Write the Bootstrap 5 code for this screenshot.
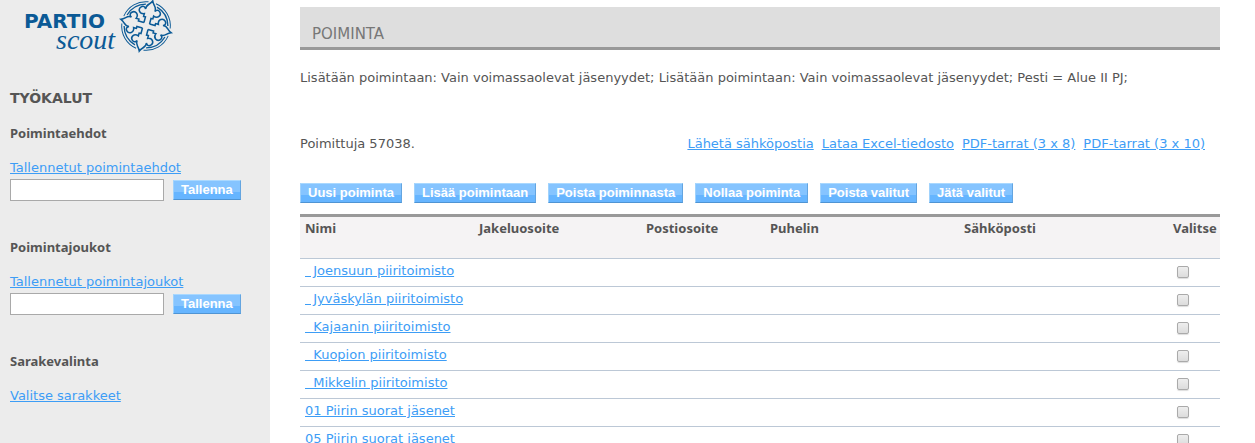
<!DOCTYPE html>
<html lang="fi">
<head>
<meta charset="utf-8">
<meta name="viewport" content="width=device-width, initial-scale=1">
<title>Poiminta</title>
<link href="https://cdn.jsdelivr.net/npm/bootstrap@5.3.0/dist/css/bootstrap.min.css" rel="stylesheet">
<style>
body { font-family: Verdana, "DejaVu Sans", sans-serif; font-size: 13px; line-height: 16px; color: #555; background: #fff; }
a { color: #3d9df6; text-decoration: underline; }
h1, h2, h3 { line-height: 16px; margin: 0; }
.side-pane { flex: 0 0 270px; background: #ececec; padding: 0 10px; }
.site-logo { display: block; width: 180px; height: 58px; }
.tools-title { font-size: 14px; font-weight: 700; margin-top: 32px; }
.tool-title { font-family: "Noto Sans", sans-serif; font-size: 13px; font-weight: 700; margin-bottom: 19px; }
.tool-block { margin-top: 38px; }
.first-block { margin-top: 19px; }
.save-row { gap: 9px; margin-top: 3px; }
.save-row input { width: 154px; height: 22px; border: 1px solid #a9a9a9; border-radius: 0; padding: 1px 4px; background: #fff; }
.btn-tool { font-family: "Liberation Sans", sans-serif; font-size: 13px; font-weight: 700; line-height: 18px; height: 20px; padding: 0 7px; color: #fff; border: 1px solid; border-color: #a9d8ff #64a5e0 #4f94d3 #a0d2fc; border-radius: 0; background: linear-gradient(#85c4ff 60%, #66b5ff 60%); white-space: nowrap; }
.btn-tool:hover { color: #fff; background: #66b5ff; border-color: #4f94d3; }
.main-pane { padding: 7px 35px 0 30px; min-width: 0; }
.page-title { font-size: 15px; font-weight: 400; color: #777; background: #dedede; border-bottom: 3px solid #999; padding: 19px 12px 5px; }
.criteria { margin: 20px 0 50px; }
.result-bar { padding-right: 15px; }
.export-links { gap: 8px; }
.button-bar { gap: 12px; margin: 31px 0 11px; }
.result-table { table-layout: fixed; width: 100%; border-top: 3px solid #999; }
.result-table th { font-family: "Noto Sans", sans-serif; font-size: 13px; height: 43px; padding: 3px 0 0 5px; background: #f5f3f4; border-bottom: 1px solid #bcc8d6; vertical-align: top; white-space: nowrap; }
.result-table td { height: 28px; padding: 4px 5px 0; border-bottom: 1px solid #bcc8d6; vertical-align: top; white-space: pre; }
.result-table input { appearance: none; display: block; width: 12px; height: 12px; margin: 3px 0 0 4px; border: 1px solid #aaa; border-radius: 2px; background: linear-gradient(#eee, #dcdcdc); box-shadow: 0 1px 1px #ddd; }
.result-table input:checked { background: #3d9df6; }
.c-name { width: 174px; } .c-street { width: 167px; } .c-post { width: 124px; } .c-phone { width: 194px; } .c-pick { width: 52px; }
</style>
</head>
<body>
<div class="d-flex min-vh-100">
  <aside class="side-pane">
    <svg class="site-logo" viewBox="10 0 180 58" role="img" aria-label="Partio Scout">
      <g fill="#0b5a96">
        <text x="24" y="28" font-family="DejaVu Sans" font-weight="700" font-size="20">PARTIO</text>
        <text x="56" y="49" font-family="Liberation Serif" font-style="italic" font-size="28">scout</text>
      </g>
      <defs>
        <path id="arm" d="M-3,-3V-9H-5V-12C-10,-10 -13,-15 -10,-18C-8,-20 -6,-19 -5,-17C-6,-22 -2,-22 0,-27C2,-22 6,-22 5,-17C6,-19 8,-20 10,-18C13,-15 10,-10 5,-12V-9H3V-3"/>
        <g id="arcs"><path d="M6,-22A23,23 0 0 1 22,-6" stroke-width="1.4"/><path d="M4,-25A25,25 0 0 1 25,-4" stroke-width="1"/></g>
      </defs>
      <g transform="translate(146 26) rotate(15) scale(.96)" fill="none" stroke="#0b5a96" stroke-width="1.6">
        <use href="#arcs"/><use href="#arcs" transform="rotate(90)"/><use href="#arcs" transform="rotate(180)"/><use href="#arcs" transform="rotate(270)"/>
        <g fill="#ececec">
          <use href="#arm"/><use href="#arm" transform="rotate(90)"/><use href="#arm" transform="rotate(180)"/><use href="#arm" transform="rotate(270)"/>
        </g>
      </g>
    </svg>
    <h2 class="tools-title">TYÖKALUT</h2>
    <section class="first-block">
      <h3 class="tool-title">Poimintaehdot</h3>
      <a href="#">Tallennetut poimintaehdot</a>
      <form class="save-row d-flex align-items-center">
        <input type="text" aria-label="Poimintaehdot"><button type="button" class="btn btn-tool">Tallenna</button>
      </form>
    </section>
    <section class="tool-block">
      <h3 class="tool-title">Poimintajoukot</h3>
      <a href="#">Tallennetut poimintajoukot</a>
      <form class="save-row d-flex align-items-center">
        <input type="text" aria-label="Poimintajoukot"><button type="button" class="btn btn-tool">Tallenna</button>
      </form>
    </section>
    <section class="tool-block">
      <h3 class="tool-title">Sarakevalinta</h3>
      <a href="#">Valitse sarakkeet</a>
    </section>
  </aside>
  <main class="main-pane flex-grow-1">
    <h1 class="page-title">POIMINTA</h1>
    <p class="criteria">Lisätään poimintaan: Vain voimassaolevat jäsenyydet; Lisätään poimintaan: Vain voimassaolevat jäsenyydet; Pesti = Alue II PJ;</p>
    <div class="result-bar d-flex justify-content-between">
      <span>Poimittuja 57038.</span>
      <nav class="export-links d-flex">
        <a href="#">Lähetä sähköpostia</a><a href="#">Lataa Excel-tiedosto</a><a href="#">PDF-tarrat (3 x 8)</a><a href="#">PDF-tarrat (3 x 10)</a>
      </nav>
    </div>
    <div class="button-bar d-flex flex-wrap">
      <button type="button" class="btn btn-tool">Uusi poiminta</button>
      <button type="button" class="btn btn-tool">Lisää poimintaan</button>
      <button type="button" class="btn btn-tool">Poista poiminnasta</button>
      <button type="button" class="btn btn-tool">Nollaa poiminta</button>
      <button type="button" class="btn btn-tool">Poista valitut</button>
      <button type="button" class="btn btn-tool">Jätä valitut</button>
    </div>
    <table class="result-table">
      <colgroup><col class="c-name"><col class="c-street"><col class="c-post"><col class="c-phone"><col><col class="c-pick"></colgroup>
      <thead><tr><th>Nimi</th><th>Jakeluosoite</th><th>Postiosoite</th><th>Puhelin</th><th>Sähköposti</th><th>Valitse</th></tr></thead>
      <tbody>
        <tr><td><a href="#">&nbsp; Joensuun piiritoimisto</a></td><td></td><td></td><td></td><td></td><td><input type="checkbox" aria-label="Valitse Joensuun piiritoimisto"></td></tr>
        <tr><td><a href="#">&nbsp; Jyväskylän piiritoimisto</a></td><td></td><td></td><td></td><td></td><td><input type="checkbox" aria-label="Valitse Jyväskylän piiritoimisto"></td></tr>
        <tr><td><a href="#">&nbsp; Kajaanin piiritoimisto</a></td><td></td><td></td><td></td><td></td><td><input type="checkbox" aria-label="Valitse Kajaanin piiritoimisto"></td></tr>
        <tr><td><a href="#">&nbsp; Kuopion piiritoimisto</a></td><td></td><td></td><td></td><td></td><td><input type="checkbox" aria-label="Valitse Kuopion piiritoimisto"></td></tr>
        <tr><td><a href="#">&nbsp; Mikkelin piiritoimisto</a></td><td></td><td></td><td></td><td></td><td><input type="checkbox" aria-label="Valitse Mikkelin piiritoimisto"></td></tr>
        <tr><td><a href="#">01 Piirin suorat jäsenet</a></td><td></td><td></td><td></td><td></td><td><input type="checkbox" aria-label="Valitse 01 Piirin suorat jäsenet"></td></tr>
        <tr><td><a href="#">05 Piirin suorat jäsenet</a></td><td></td><td></td><td></td><td></td><td><input type="checkbox" aria-label="Valitse 05 Piirin suorat jäsenet"></td></tr>
      </tbody>
    </table>
  </main>
</div>
</body>
</html>
